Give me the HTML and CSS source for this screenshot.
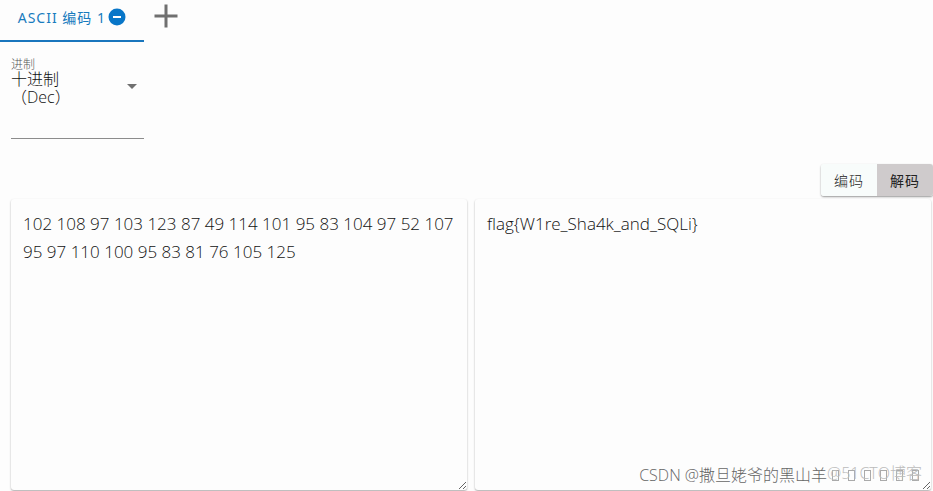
FILE: index.html
```html
<!DOCTYPE html>
<html lang="zh-CN">
<head>
<meta charset="utf-8">
<title>ASCII 编码</title>
<link rel="stylesheet" href="styles.css">
</head>
<body>
<div class="app">
  <nav class="tabs">
    <div class="tab">
      <a class="tab-link" href="#ascii">ASCII 编码 1</a>
      <button class="icon-button" type="button" aria-label="移除">
        <svg width="18" height="18" viewBox="0 0 18 18"><circle cx="9" cy="9" r="8.5" fill="#0876c8"/><path d="M5 9h8" stroke="#fff" stroke-width="2"/></svg>
      </button>
    </div>
    <button class="icon-button add" type="button" aria-label="添加">
      <svg width="24" height="24" viewBox="0 0 24 24"><path d="M12 0.5v23M0.5 12h23" stroke="#707070" stroke-width="3"/></svg>
    </button>
  </nav>
  <main class="panel">
    <div class="field">
      <label class="field-label" for="radix">进制</label>
      <div class="field-value">
        <span class="field-text" aria-hidden="true">十进制<br>（Dec）</span>
        <svg class="caret" width="10" height="5" viewBox="0 0 10 5"><path d="M0 0h10L5 5z" fill="#707070"/></svg>
        <select id="radix" class="field-select">
          <option value="10" aria-label="十进制（Dec）"></option>
        </select>
      </div>
    </div>
    <div class="modes">
      <button class="mode" type="button">编码</button>
      <button class="mode active" type="button" aria-pressed="true">解码</button>
    </div>
    <div class="editors">
      <textarea class="editor" aria-label="编码内容" spellcheck="false">102 108 97 103 123 87 49 114 101 95 83 104 97 52 107 95 97 110 100 95 83 81 76 105 125</textarea>
      <textarea class="editor" aria-label="解码结果" spellcheck="false">flag{W1re_Sha4k_and_SQLi}</textarea>
    </div>
  </main>
  <div class="credit">CSDN @撒旦姥爷的黑山羊<span class="boxes"><i></i><i></i><i></i><i></i><i></i><i></i></span></div>
  <div class="host">@51CTO博客</div>
</div>
</body>
</html>
```

FILE: styles.css
```css
* {
  box-sizing: border-box;
}

body {
  margin: 0;
  background: #fdfdfd;
  color: #111;
  font-family: "Open Sans", "Noto Sans CJK SC", sans-serif;
  font-size: 16px;
  font-weight: 300;
}

.app {
  position: relative;
  display: flex;
  flex-direction: column;
  min-height: 100vh;
  overflow: hidden;
}

button {
  border: 0;
  font: inherit;
  cursor: pointer;
}

.tabs {
  display: flex;
  align-items: flex-start;
  gap: 10px;
}

.tab {
  display: flex;
  align-items: center;
  justify-content: flex-end;
  gap: 2px;
  width: 144px;
  height: 42px;
  padding: 0 18px 6px 0;
  border-bottom: 2px solid #1976bd;
}

.tab-link {
  color: #187bbd;
  font-family: "Noto Sans", "Noto Sans CJK SC", sans-serif;
  font-size: 14px;
  font-weight: 400;
  letter-spacing: 1px;
  text-decoration: none;
  white-space: nowrap;
}

.icon-button {
  display: flex;
  padding: 0;
  background: none;
}

.add {
  margin-top: 4px;
}

.panel {
  display: flex;
  flex: 1;
  flex-direction: column;
  padding: 18px 2px 1px 11px;
}

.field {
  width: 133px;
  height: 79px;
  border-bottom: 1px solid #8c8c8c;
}

.field-label {
  display: block;
  color: #555;
  font-size: 12px;
  line-height: 10px;
}

.field-value {
  position: relative;
  display: flex;
  align-items: flex-start;
  justify-content: space-between;
  padding-right: 7px;
}

.field-text {
  line-height: 18px;
}

.caret {
  margin-top: 14px;
}

.field-select {
  position: absolute;
  inset: 0;
  width: 100%;
  opacity: 0;
}

.modes {
  display: flex;
  align-self: flex-end;
  margin: 25px -2px 0 0;
  border-radius: 3px;
  box-shadow: 0 1px 2px #0006;
}

.mode {
  width: 56px;
  height: 32px;
  padding: 0;
  border-radius: 3px 0 0 3px;
  background: #f8fcfb;
  color: #222;
  font-size: 14px;
  letter-spacing: 1px;
}

.mode.active {
  border-radius: 0 3px 3px 0;
  background: #cfcbcc;
  font-weight: 400;
}

.editors {
  display: grid;
  flex: 1;
  grid-template-columns: 1fr 1fr;
  gap: 8px;
  margin-top: 3px;
}

.editor {
  width: 100%;
  min-height: 291px;
  padding: 11px 12px;
  border: 0;
  border-radius: 3px;
  background: #fdfdfd;
  box-shadow: 0 1px 2px #0005;
  color: #111;
  font: inherit;
  font-size: 17px;
  line-height: 28px;
  outline: 0;
}

.credit,
.host {
  position: absolute;
  bottom: 4px;
  line-height: 24px;
  white-space: nowrap;
  pointer-events: none;
}

.credit {
  right: 14px;
  display: flex;
  align-items: center;
  color: #666;
  font-size: 16px;
}

.boxes {
  display: flex;
  gap: 9px;
  margin-left: 5px;
}

.boxes i {
  width: 7px;
  height: 11px;
  border: 1px solid #aaa;
}

.host {
  right: 11px;
  bottom: 6px;
  color: #bbb;
}
```
